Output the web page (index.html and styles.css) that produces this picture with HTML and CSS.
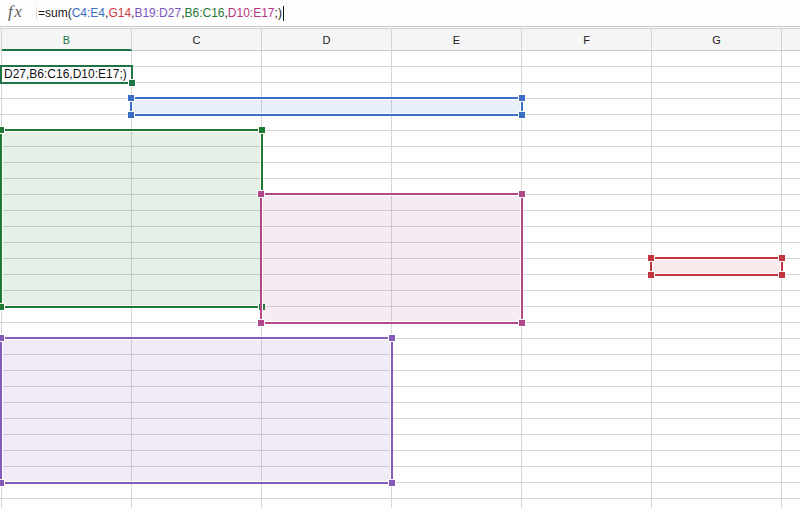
FILE: index.html
```html
<!DOCTYPE html>
<html>
<head>
<meta charset="utf-8">
<link rel="stylesheet" href="styles.css">
</head>
<body>
<div class="app">
  <div class="formula-bar">
    <span class="fx">fx</span>
    <span class="fsep"></span>
    <span class="formula">=sum(<span class="c-blue">C4:E4</span>,<span class="c-red">G14</span>,<span class="c-purple">B19:D27</span>,<span class="c-green">B6:C16</span>,<span class="c-pink">D10:E17</span>;)</span><span class="caret"></span>
  </div>
  <div class="gap"></div>
  <div class="col-headers">
    <div class="ch edge"></div>
    <div class="ch sel">B</div>
    <div class="ch">C</div>
    <div class="ch">D</div>
    <div class="ch">E</div>
    <div class="ch">F</div>
    <div class="ch">G</div>
    <div class="ch"></div>
  </div>
  <div class="sheet">
    <div class="editor">D27,B6:C16,D10:E17;)<span class="h br"></span></div>
    <div class="rng blue r-c4e4"><span class="h tl"></span><span class="h tr"></span><span class="h bl"></span><span class="h br"></span></div>
    <div class="rng green r-b6c16"><span class="h tl"></span><span class="h tr"></span><span class="h bl"></span><span class="h br"></span></div>
    <div class="rng pink r-d10e17"><span class="h tl"></span><span class="h tr"></span><span class="h bl"></span><span class="h br"></span></div>
    <div class="rng red r-g14"><span class="h tl"></span><span class="h tr"></span><span class="h bl"></span><span class="h br"></span></div>
    <div class="rng purple r-b19d27"><span class="h tl"></span><span class="h tr"></span><span class="h bl"></span><span class="h br"></span></div>
  </div>
</div>
</body>
</html>
```

FILE: styles.css
```css
* { box-sizing: border-box; }
html, body { margin: 0; padding: 0; background: #fff; }
.app {
  width: 800px;
  height: 508px;
  overflow: hidden;
  font-family: "Liberation Sans", Arial, sans-serif;
}
.formula-bar {
  height: 27px;
  background: #fdfdfd;
  border-bottom: 1px solid #c9c9c9;
  display: flex;
  align-items: center;
  padding-left: 8px;
}
.fx {
  font-family: "Liberation Serif", "DejaVu Serif", serif;
  font-style: italic;
  font-size: 17px;
  color: #5e5e5e;
  width: 28px;
  letter-spacing: 1.5px;
  margin-top: -2px;
}
.fsep {
  width: 1px;
  height: 12px;
  background: #dadada;
  margin-right: 1px;
}
.formula {
  font-size: 12px;
  color: #1a1a1a;
  white-space: nowrap;
  margin-top: -1px;
}
.caret {
  width: 1px;
  height: 15px;
  background: #111;
  margin-left: 1px;
}
.c-blue { color: #3b6fc6; }
.c-red { color: #d0363f; }
.c-purple { color: #7e55bd; }
.c-green { color: #1f7a3a; }
.c-pink { color: #b8357f; }
.gap { height: 1px; background: #fff; }
.col-headers {
  display: grid;
  grid-template-columns: 2px repeat(7, 130px);
  height: 23px;
  border-top: 1px solid #d0d0d0;
  background: #f5f5f5;
}
.ch {
  border-right: 1px solid #d4d4d4;
  border-bottom: 1px solid #c8c8c8;
  display: flex;
  align-items: center;
  justify-content: center;
  font-family: "Liberation Sans", Arial, sans-serif;
  font-size: 11px;
  color: #222;
  padding-top: 1px;
}
.ch.sel {
  color: #217346;
  border-bottom: 2px solid #217346;
  padding-top: 2px;
}
.sheet {
  position: relative;
  height: 457px;
  background-image:
    linear-gradient(to left, #d6d6d6 1px, transparent 1px),
    linear-gradient(to top, #d6d6d6 1px, transparent 1px);
  background-size: 130px 16px, 130px 16px;
  background-position: 2px 0, 0 0;
}
.editor {
  position: absolute;
  left: 0;
  top: 14px;
  width: 133px;
  height: 19px;
  border: 2px solid #217346;
  background: #fff;
  font-size: 12px;
  color: #111;
  padding-left: 2px;
  line-height: 15px;
  white-space: nowrap;
}
.rng {
  position: absolute;
  border: 2px solid;
  box-shadow: inset 0 0 0 1px #fff;
}
.h {
  position: absolute;
  width: 8px;
  height: 8px;
  border: 1px solid #fff;
  background: currentColor;
}
.h.tl { left: -5px; top: -5px; }
.h.tr { right: -5px; top: -5px; }
.h.bl { left: -5px; bottom: -5px; }
.h.br { right: -5px; bottom: -5px; }
.editor .h { color: #217346; }

.blue { color: #3b6fc6; border-color: #3b6fc6; background: rgba(59, 111, 198, 0.11); }
.green { color: #1f7a34; border-color: #1f7a34; background: rgba(40, 140, 60, 0.12); }
.pink { color: #b0488a; border-color: #b0488a; background: rgba(176, 72, 138, 0.11); }
.red { color: #c3353e; border-color: #c3353e; background: rgba(195, 53, 62, 0.11); }
.purple { color: #845bb9; border-color: #845bb9; background: rgba(132, 91, 185, 0.12); }

.r-c4e4 { left: 130px; top: 46px; width: 393px; height: 19px; }
.r-b6c16 { left: 0; top: 78px; width: 263px; height: 179px; }
.r-d10e17 { left: 260px; top: 142px; width: 263px; height: 131px; }
.r-g14 { left: 650px; top: 206px; width: 133px; height: 19px; }
.r-b19d27 { left: 0; top: 286px; width: 393px; height: 147px; }
```
